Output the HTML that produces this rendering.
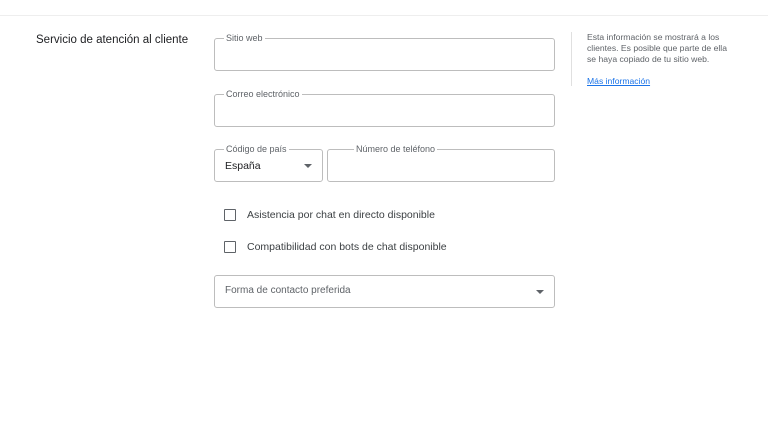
<!DOCTYPE html>
<html><head><meta charset="utf-8"><style>
body{margin:0;width:768px;height:432px;background:#fff;font-family:"Liberation Sans",Arial,sans-serif;position:relative;overflow:hidden}
.a{position:absolute}
.box{position:absolute;border:1px solid #bdbdbd;border-radius:3px;box-sizing:border-box}
.lbl{position:absolute;top:-7px;left:9px;background:#fff;padding:0 2px;font-size:9px;color:#5f6368;line-height:12px}
.cb{position:absolute;width:12px;height:12px;border:1.5px solid #5f6368;border-radius:1px;box-sizing:border-box}
.ct{position:absolute;font-size:10.5px;color:#3c4043}
.arrow{position:absolute;width:0;height:0;border-left:4px solid transparent;border-right:4px solid transparent;border-top:4px solid #5f6368}
</style></head><body>
<div class="a" style="left:0;top:15px;width:768px;height:1px;background:#eeeeee"></div>
<div class="a" style="left:36px;top:34px;font-size:11.5px;color:#202124">Servicio de atención al cliente</div>

<div class="box" style="left:214px;top:38px;width:341px;height:33px"><div class="lbl">Sitio web</div></div>
<div class="box" style="left:214px;top:94px;width:341px;height:33px"><div class="lbl">Correo electrónico</div></div>
<div class="box" style="left:214px;top:149px;width:109px;height:33px"><div class="lbl">Código de país</div>
<div class="a" style="left:10px;top:10px;font-size:10.5px;color:#202124">España</div>
<div class="arrow" style="left:89px;top:14px"></div></div>
<div class="box" style="left:327px;top:149px;width:228px;height:33px"><div class="lbl" style="left:26px">Número de teléfono</div></div>

<div class="cb" style="left:224px;top:209px"></div>
<div class="ct" style="left:247px;top:209px">Asistencia por chat en directo disponible</div>
<div class="cb" style="left:224px;top:241px"></div>
<div class="ct" style="left:247px;top:241px">Compatibilidad con bots de chat disponible</div>

<div class="box" style="left:214px;top:275px;width:341px;height:33px">
<div class="a" style="left:10px;top:9px;font-size:10px;color:#5f6368">Forma de contacto preferida</div>
<div class="arrow" style="left:321px;top:14px"></div></div>

<div class="a" style="left:571px;top:32px;width:1px;height:54px;background:#e0e0e0"></div>
<div class="a" style="left:587px;top:32px;font-size:8.6px;line-height:11px;color:#5f6368;width:150px">Esta información se mostrará a los<br>clientes. Es posible que parte de ella<br>se haya copiado de tu sitio web.</div>
<div class="a" style="left:587px;top:76px;font-size:8.6px;color:#1a73e8;text-decoration:underline">Más información</div>
</body></html>
